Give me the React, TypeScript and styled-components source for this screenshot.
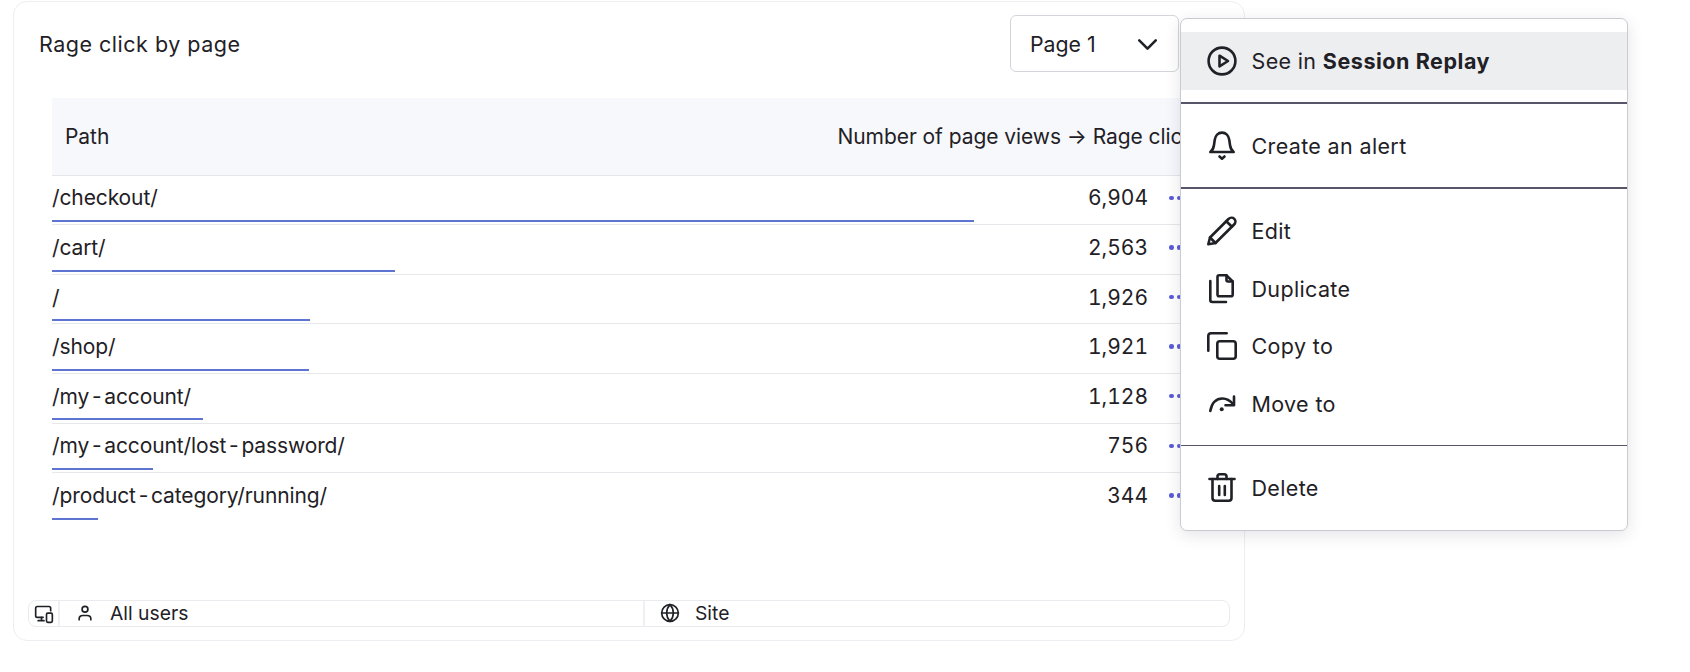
import React from "react"
import styled, {createGlobalStyle} from "styled-components"
import {ChevronDown, Globe} from "lucide-react"

const GlobalStyle = createGlobalStyle`
  html, body {
    margin: 0;
    background: #fff;
  }
  body {
    font-family: Inter, "Liberation Sans", sans-serif;
    color: #1f2126;
  }
  * {
    box-sizing: border-box;
  }
`

const Page = styled.div`
  position: relative;
  width: 1690px;
  height: 672px;
  padding: 1px 0 0 13px;
  overflow: hidden;
`

const Card = styled.section`
  display: flex;
  flex-direction: column;
  width: 1232px;
  height: 640px;
  padding: 13px 14px 13px;
  border: 1px solid #eceef1;
  border-radius: 14px;
`

const CardHeader = styled.header`
  display: flex;
  align-items: center;
  justify-content: space-between;
  height: 56px;
  padding: 0 51px 0 11px;
`

const Title = styled.h2`
  margin: 2px 0 0;
  font-size: 21.5px;
  font-weight: 400;
  letter-spacing: 0.5px;
`

const Select = styled.div`
  display: flex;
  align-items: center;
  justify-content: space-between;
  width: 169px;
  height: 57px;
  padding: 2px 14px 0 19px;
  border: 1px solid #d3d5da;
  border-radius: 6px;
  font-size: 21.3px;
`

const Table = styled.div`
  display: flex;
  flex-direction: column;
  flex: 1;
  margin: 27px 0 0 24px;
`

const HeaderRow = styled.div`
  display: flex;
  align-items: center;
  justify-content: space-between;
  flex: none;
  height: 77.6px;
  padding: 0 25px 0 13px;
  background: #f7f8fc;
  border-bottom: 1px solid #e4e6ea;
  font-size: 21px;
  letter-spacing: -0.06px;
  white-space: nowrap;
`

const Row = styled.div`
  display: flex;
  flex-direction: column;
  flex: none;
  height: 49.6px;
  border-bottom: 1px solid #e6e8eb;

  &:last-child {
    border-bottom: 0;
  }
`

const RowMain = styled.div`
  display: flex;
  align-items: center;
  flex: none;
  height: 44.5px;
  font-size: 21px;
`

const PathText = styled.span`
  flex: 1;
  letter-spacing: -0.11px;
`

const Hyphen = styled.span`
  margin: 0 2.8px;
`

const Count = styled.span`
  font-variant-numeric: tabular-nums;
`

const Dots = styled.span`
  display: flex;
  gap: 3px;
  margin: 0 41.5px 0 21px;
`

const Dot = styled.i`
  width: 4.5px;
  height: 4.5px;
  border-radius: 50%;
  background: #5a5bd8;
`

const Bar = styled.div`
  flex: none;
  height: 2px;
  background: #5e74d2;
`

const Footer = styled.footer`
  display: grid;
  grid-template-columns: 29px 585px 1fr;
  flex: none;
  height: 27px;
  border: 1px solid #e9ebee;
  border-radius: 8px;
  font-size: 19.3px;
`

const FooterCell = styled.div`
  display: flex;
  align-items: center;
  gap: 15px;
  padding: 0 0 1px 15px;
  border-left: 2px solid #eef0f3;

  &:first-child {
    justify-content: center;
    padding: 0;
    border-left: 0;
  }
`

const Menu = styled.div`
  position: absolute;
  top: 18px;
  left: 1180px;
  width: 448px;
  height: 513px;
  padding: 13px 0;
  background: #fff;
  border: 1px solid #c9cad2;
  border-radius: 7px;
  box-shadow: 0 4px 16px rgba(30, 32, 60, 0.12);
`

const MenuItem = styled.div<{$active?: boolean}>`
  display: flex;
  align-items: center;
  gap: 12.5px;
  height: 57.7px;
  padding-left: 24px;
  font-size: 21.5px;
  letter-spacing: 0.35px;
  background: ${(p) => (p.$active ? "#edeef0" : "transparent")};

  svg {
    flex: none;
  }

  b {
    font-weight: 700;
    letter-spacing: 0.55px;
  }
`

const Divider = styled.hr<{$size: number}>`
  margin: 12.2px 0 13.2px;
  border: 0;
  height: ${(p) => p.$size}px;
  background: #565668;
`

function MenuIcon({children}: {children: React.ReactNode}) {
  return (
    <svg
      width={34}
      height={34}
      viewBox="0 0 34 34"
      fill="none"
      stroke="currentColor"
      strokeWidth={2.6}
      strokeLinecap="round"
      strokeLinejoin="round"
    >
      {children}
    </svg>
  )
}

function FooterIcon({children}: {children: React.ReactNode}) {
  return (
    <svg
      width={20}
      height={20}
      viewBox="0 0 24 24"
      fill="none"
      stroke="currentColor"
      strokeWidth={2}
      strokeLinecap="round"
      strokeLinejoin="round"
    >
      {children}
    </svg>
  )
}

const PlayIcon = () => (
  <MenuIcon>
    <circle cx="17" cy="17" r="13.4" />
    <path d="M14.500 11.700 23 17l-8.500 5.300Z" />
  </MenuIcon>
)

const BellIcon = () => (
  <MenuIcon>
    <path d="M5.300 23H28.700C26.500 21.500 25.500 19.500 25 16L24.300 11C23.700 6.500 20.800 3.600 17 3.600S10.300 6.500 9.700 11L9 16C8.500 19.500 7.500 21.500 5.300 23Z" />
    <path d="M14.500 27.500 17 29.700l2.500-2.200" />
  </MenuIcon>
)

const PencilIcon = () => (
  <MenuIcon>
    <path d="M3.300 30.200 5 23.500 23.500 5C25.200 3.300 27.800 3.300 29.300 4.800S30.800 8.800 29.100 10.500L10.500 29Z" />
    <path d="M21.300 7.200 26.900 12.700" />
    <path d="M5 23.500 10.500 29" />
  </MenuIcon>
)

const DuplicateIcon = () => (
  <MenuIcon>
    <path d="M12.500 4.700c0-1 .8-1.400 1.500-1.400H21.500L27.700 9.500V22.500c0 1-.7 1.800-1.700 1.800H14.200c-1 0-1.700-.8-1.700-1.800Z" />
    <path d="M21.500 3.300V8c0 1 .6 1.500 1.500 1.500H27.700" />
    <path d="M5.300 9V28c0 1.300.7 2 2 2H21" />
  </MenuIcon>
)

const CopyIcon = () => (
  <MenuIcon>
    <rect x="12.300" y="12.300" width="18.400" height="17.400" rx="2.500" />
    <path d="M21.700 4.300H6C4.300 4.300 3.300 5.300 3.300 7V21.700" />
  </MenuIcon>
)

const MoveIcon = () => (
  <MenuIcon>
    <path d="M5.300 24C7 15 12 11.500 17.500 11.500 22 11.500 25.500 14 28.500 17.500" />
    <path d="M29 9.500V18.300H20.500" />
    <circle cx="16.700" cy="22.300" r="2" fill="currentColor" stroke="none" />
  </MenuIcon>
)

const TrashIcon = () => (
  <MenuIcon>
    <path d="M4.500 8H29.500" />
    <path d="M12.500 8V5.500c0-1.500 1-2.300 2.300-2.300h4.400c1.300 0 2.300.8 2.300 2.300V8" />
    <path d="M7.500 8V27c0 1.700 1 2.700 2.700 2.700H23.800c1.700 0 2.700-1 2.700-2.700V8" />
    <path d="M14.200 15V24M19.800 15V24" />
  </MenuIcon>
)

const DevicesIcon = () => (
  <FooterIcon>
    <path d="M11 16H4c-1 0-2-.8-2-2V5c0-1.200 1-2 2-2h14c1 0 2 .8 2 2v3" />
    <path d="M5 20h7M9 16v4" />
    <rect x="15" y="11" width="7" height="11" rx="1.500" />
  </FooterIcon>
)

const UserIcon = () => (
  <FooterIcon>
    <circle cx="12" cy="7.500" r="3.500" />
    <path d="M5 20v-1c0-2.500 2-4 4.500-4h5c2.500 0 4.500 1.500 4.500 4v1" />
  </FooterIcon>
)

const rows = [
  {path: "/checkout/", count: "6,904", bar: 922},
  {path: "/cart/", count: "2,563", bar: 343},
  {path: "/", count: "1,926", bar: 257.5},
  {path: "/shop/", count: "1,921", bar: 256.5},
  {path: "/my-account/", count: "1,128", bar: 151},
  {path: "/my-account/lost-password/", count: "756", bar: 101},
  {path: "/product-category/running/", count: "344", bar: 46},
]

// the hyphens sit wider apart in the reference than the font sets them
function spacedPath(path: string) {
  return path.split("-").map((part, i) => (
    <React.Fragment key={i}>
      {i > 0 && <Hyphen>-</Hyphen>}
      {part}
    </React.Fragment>
  ))
}

export default function App() {
  return (
    <Page>
      <GlobalStyle />
      <Card>
        <CardHeader>
          <Title>Rage click by page</Title>
          <Select>
            Page 1
            <ChevronDown size={33} strokeWidth={1.9} />
          </Select>
        </CardHeader>
        <Table>
          <HeaderRow>
            <span>Path</span>
            <span>Number of page views → Rage clicks</span>
          </HeaderRow>
          {rows.map((row) => (
            <Row key={row.path}>
              <RowMain>
                <PathText>{spacedPath(row.path)}</PathText>
                <Count>{row.count}</Count>
                <Dots>
                  <Dot />
                  <Dot />
                  <Dot />
                </Dots>
              </RowMain>
              <Bar style={{width: row.bar}} />
            </Row>
          ))}
        </Table>
        <Footer>
          <FooterCell>
            <DevicesIcon />
          </FooterCell>
          <FooterCell>
            <UserIcon />
            All users
          </FooterCell>
          <FooterCell>
            <Globe size={20} strokeWidth={2} />
            Site
          </FooterCell>
        </Footer>
      </Card>
      <Menu>
        <MenuItem $active>
          <PlayIcon />
          <span>
            See in <b>Session Replay</b>
          </span>
        </MenuItem>
        <Divider $size={2} />
        <MenuItem>
          <BellIcon />
          Create an alert
        </MenuItem>
        <Divider $size={2} />
        <MenuItem>
          <PencilIcon />
          Edit
        </MenuItem>
        <MenuItem>
          <DuplicateIcon />
          Duplicate
        </MenuItem>
        <MenuItem>
          <CopyIcon />
          Copy to
        </MenuItem>
        <MenuItem>
          <MoveIcon />
          Move to
        </MenuItem>
        <Divider $size={1} />
        <MenuItem>
          <TrashIcon />
          Delete
        </MenuItem>
      </Menu>
    </Page>
  )
}
